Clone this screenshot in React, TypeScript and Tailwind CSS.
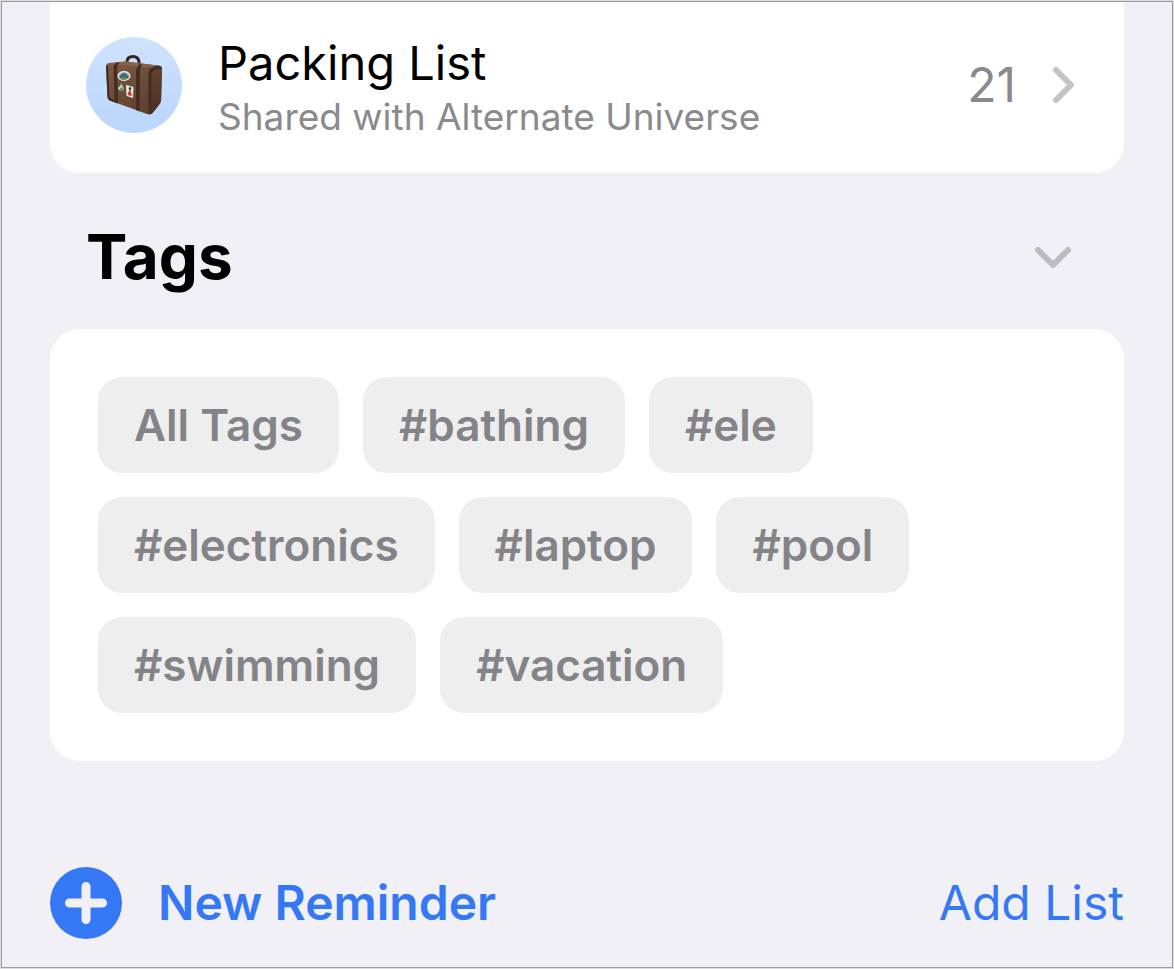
import { useState } from 'react';

const TAGS = [
  'All Tags',
  '#bathing',
  '#ele',
  '#electronics',
  '#laptop',
  '#pool',
  '#swimming',
  '#vacation',
];

const SuitcaseIcon = () => (
  <svg width="58" height="62" viewBox="0 0 58 62" aria-hidden="true">
    <defs>
      <linearGradient id="leather" x1="0" y1="0" x2="0.6" y2="1">
        <stop offset="0" stopColor="#805a43" />
        <stop offset="1" stopColor="#5f3f2d" />
      </linearGradient>
      <linearGradient id="side" x1="0" y1="0" x2="0" y2="1">
        <stop offset="0" stopColor="#65432f" />
        <stop offset="1" stopColor="#4a3023" />
      </linearGradient>
    </defs>
    {/* handle */}
    <path d="M22 10 L22 7.500 Q22.500 2.500 28 2.500 Q33.500 2.500 34 8 L34 12" fill="none" stroke="#33261f" strokeWidth="3" strokeLinecap="round" />
    {/* body */}
    <path d="M1 12 Q1 9.500 4 9 L20 7.500 L53 11.500 Q57 12 57 15 L56 47 Q55.500 50 47 59.500 Q45 61 42 60 L5 46.500 Q2.500 45.500 2.500 43 Z" fill="url(#leather)" />
    <path d="M46 20 Q46.500 15 50 13.500 L54 12 Q57 12.500 57 15 L56 47 Q54.500 51 47 59.500 L46 60 Z" fill="url(#side)" />
    <path d="M4 10 L20 7.500 L53 11.500 L46 13.500 Z" fill="#87634a" />
    {/* straps */}
    <path d="M8.500 13 Q9 10 11.500 8.500 L14.500 8.500 Q12 11 12 14 L13 49.500 L10 48.500 Z" fill="#422d22" />
    <path d="M31 17 Q31.500 12.500 34.500 10 L37.500 10.500 Q35 13 35 18 L34.500 57.500 L31 56 Z" fill="#422d22" />
    <path d="M1 12 L3 11.500 L4.500 43.500 L10 46 L10 48.500 L4.500 46.500 Q2.500 45.500 2.500 43 Z" fill="#422d22" />
    <path d="M43.500 60 L43.500 20 Q43.500 15.500 47 13.500 L53 11.500 Q57 12 57 14.500 L50 16 Q46.500 17 46.500 22 L46.500 60 Z" fill="#422d22" />
    {/* stickers */}
    <ellipse cx="19" cy="22" rx="6.500" ry="5" fill="#edf0e5" />
    <ellipse cx="19" cy="22" rx="5.200" ry="3.700" fill="#72a9c5" />
    <path d="M14 23 L17 20 L20 19 L24 23 Q22 26 18 25.500 Z" fill="#3f6577" />
    <path d="M14.500 24 Q20 22.500 24 24 Q21 26.500 16 25.500 Z" fill="#7c8b38" />
    <path d="M16 29.500 L13 35 L16 37 L19 36 L18 32 Z" fill="#9cc9c6" />
    <path d="M15 34 L19 34.500 L18 37 L15 36.500 Z" fill="#5c9550" />
    <path d="M13 33 L15 34 L14 36 Z" fill="#f0d98a" />
    <path d="M21 31 L28.500 33 L28 44 L21.500 42 Z" fill="#e4e7dd" />
    <path d="M24 33 L26 34 L25.500 37 L27 42 L22.500 41 L24 37 Z" fill="#b73a30" />
    <circle cx="25" cy="34.500" r="1.300" fill="#3d3d38" />
  </svg>
);

const App = () => {
  const [open, setOpen] = useState(true);

  return (
    <div className="flex min-h-screen bg-[#dedee0] p-px font-['Inter',sans-serif]">
      <main className="flex flex-1 flex-col border border-[#9b9b9e] bg-[#f1f0f6] px-12 pb-7">
        <section className="rounded-b-[30px] bg-white">
          <a href="#packing-list" className="flex items-center gap-9 pt-[27px] pr-12 pb-8 pl-9">
            <span className="flex size-24 shrink-0 items-center justify-center rounded-full bg-linear-to-b from-[#cfe2fe] to-[#bad6fc]">
              <SuitcaseIcon />
            </span>
            <span className="flex-1 pt-1">
              <span className="block text-[47px] leading-[60px] text-black">Packing List</span>
              <span className="block text-[37px] leading-[48px] text-[#8a8a8c]">Shared with Alternate Universe</span>
            </span>
            <span className="text-[48px] leading-[60px] text-[#8a8a8c]">21</span>
            <svg width="24" height="38" viewBox="0 0 24 38" fill="none" aria-hidden="true">
              <path d="M4 4 L19 19 L4 34" stroke="#c4c4c7" strokeWidth="6" strokeLinecap="round" strokeLinejoin="round" />
            </svg>
          </a>
        </section>

        <div className="flex items-center justify-between pt-12 pr-[52px] pb-9 pl-9">
          <h2 className="text-[62px] leading-[72px] font-bold text-black">Tags</h2>
          <button type="button" aria-label="Toggle tags" aria-expanded={open} onClick={() => setOpen(!open)} className="cursor-pointer">
            <svg width="38" height="24" viewBox="0 0 38 24" fill="none" aria-hidden="true">
              <path d="M4 5 L19 20 L34 5" stroke="#bcbbc1" strokeWidth="6" strokeLinecap="round" strokeLinejoin="round" />
            </svg>
          </button>
        </div>

        {open && (
          <section className="flex flex-wrap gap-6 rounded-[30px] bg-white p-12">
            {TAGS.map((tag) => (
              <button
                key={tag}
                type="button"
                className="h-24 cursor-pointer rounded-3xl bg-[#eeeeee] px-9 text-[44px] leading-[60px] font-semibold text-[#848388]"
              >
                {tag}
              </button>
            ))}
          </section>
        )}

        <footer className="mt-auto flex items-center justify-between">
          <button type="button" className="flex cursor-pointer items-center gap-9 text-[48px] leading-[72px] font-semibold text-[#3478f6]">
            <svg width="72" height="72" viewBox="0 0 72 72" aria-hidden="true">
              <circle cx="36" cy="36" r="36" fill="#3478f6" />
              <path d="M36 19.500 V52.500 M19.500 36 H52.500" stroke="#f1f0f6" strokeWidth="9" strokeLinecap="round" />
            </svg>
            New Reminder
          </button>
          <button type="button" className="cursor-pointer text-[48px] leading-[72px] text-[#3478f6]">
            Add List
          </button>
        </footer>
      </main>
    </div>
  );
};

export default App;
